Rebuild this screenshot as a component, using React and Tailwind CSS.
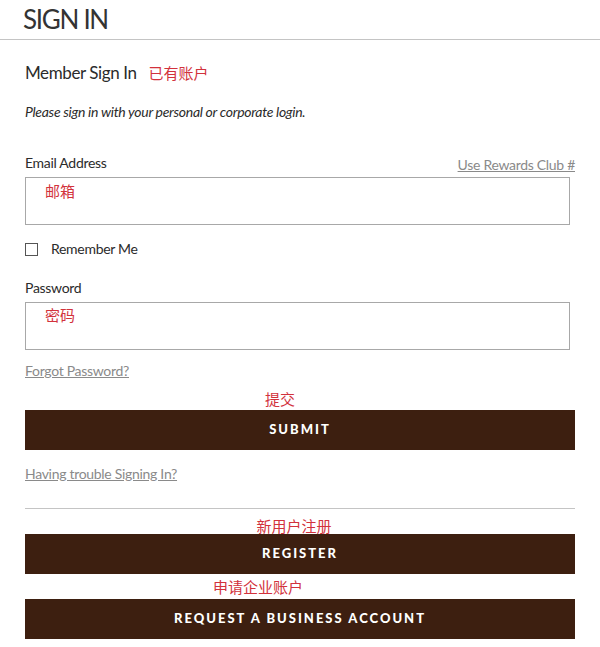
export default function App() {
  const red = "text-[#d2323c]";
  return (
    <div className="w-[600px] h-[647px] bg-white text-[#2b2b2b] font-['Lato',_'Noto_Sans_CJK_SC',_sans-serif] overflow-hidden">
      <div className="h-[40px] border-b border-[#c4c4c4] pl-[23px] pt-[4px]">
        <h1 className="text-[26px] leading-[30px] font-normal tracking-[-1.3px] text-[#333]">SIGN IN</h1>
      </div>

      <div className="px-[25px]">
        <div className="mt-[22px] flex items-center h-[22px]">
          <h2 className="text-[17px] leading-[22px] tracking-[-0.4px]">Member Sign In</h2>
          <span className={`ml-[12px] text-[15px] ${red}`}>已有账户</span>
        </div>

        <p className="mt-[19px] text-[14px] leading-[18px] italic tracking-[-0.3px]">
          Please sign in with your personal or corporate login.
        </p>

        <div className="mt-[33px] flex justify-between items-end h-[18px]">
          <label className="text-[14px] leading-[18px] tracking-[-0.3px]">Email Address</label>
          <a href="#" className="text-[14px] leading-[18px] text-[#8a8a8a] underline tracking-[-0.3px] translate-y-[2px]">
            Use Rewards Club #
          </a>
        </div>
        <div className="mt-[5px] w-[545px] h-[48px] border border-[#a8a8a8] pl-[19px] pt-[1px]">
          <span className={`text-[15px] leading-[20px] ${red}`}>邮箱</span>
        </div>

        <div className="mt-[16px] flex items-center h-[16px]">
          <span className="w-[13px] h-[13px] border border-[#555] bg-white"></span>
          <span className="ml-[13px] text-[14px] leading-[18px] tracking-[-0.3px]">Remember Me</span>
        </div>

        <label className="block mt-[22px] text-[14px] leading-[18px] tracking-[-0.3px]">Password</label>
        <div className="mt-[5px] w-[545px] h-[48px] border border-[#a8a8a8] pl-[19px] pt-0">
          <span className={`text-[15px] leading-[20px] ${red}`}>密码</span>
        </div>

        <a href="#" className="block mt-[12px] text-[14px] leading-[18px] text-[#8a8a8a] underline tracking-[-0.3px]">
          Forgot Password?
        </a>

        <div className={`mt-[9px] text-center text-[15px] leading-[20px] pr-[40px] ${red}`}>提交</div>
        <button className="mt-[1px] w-full h-[40px] bg-[#3d1f10] text-white text-[13px] font-black tracking-[2px]">
          SUBMIT
        </button>

        <a href="#" className="block mt-[15px] text-[14px] leading-[18px] text-[#8a8a8a] underline tracking-[-0.3px]">
          Having trouble Signing In?
        </a>

        <div className="mt-[25px] border-t border-[#c4c4c4]"></div>

        <div className={`mt-[9px] text-center text-[15px] leading-[16px] pr-[12px] ${red}`}>新用户注册</div>
        <button className="w-full h-[40px] bg-[#3d1f10] text-white text-[13px] font-black tracking-[2px]">
          REGISTER
        </button>

        <div className={`mt-[1px] text-center text-[15px] leading-[24px] pr-[84px] ${red}`}>申请企业账户</div>
        <button className="w-full h-[40px] bg-[#3d1f10] text-white text-[13px] font-black tracking-[2px]">
          REQUEST A BUSINESS ACCOUNT
        </button>
      </div>
    </div>
  );
}
